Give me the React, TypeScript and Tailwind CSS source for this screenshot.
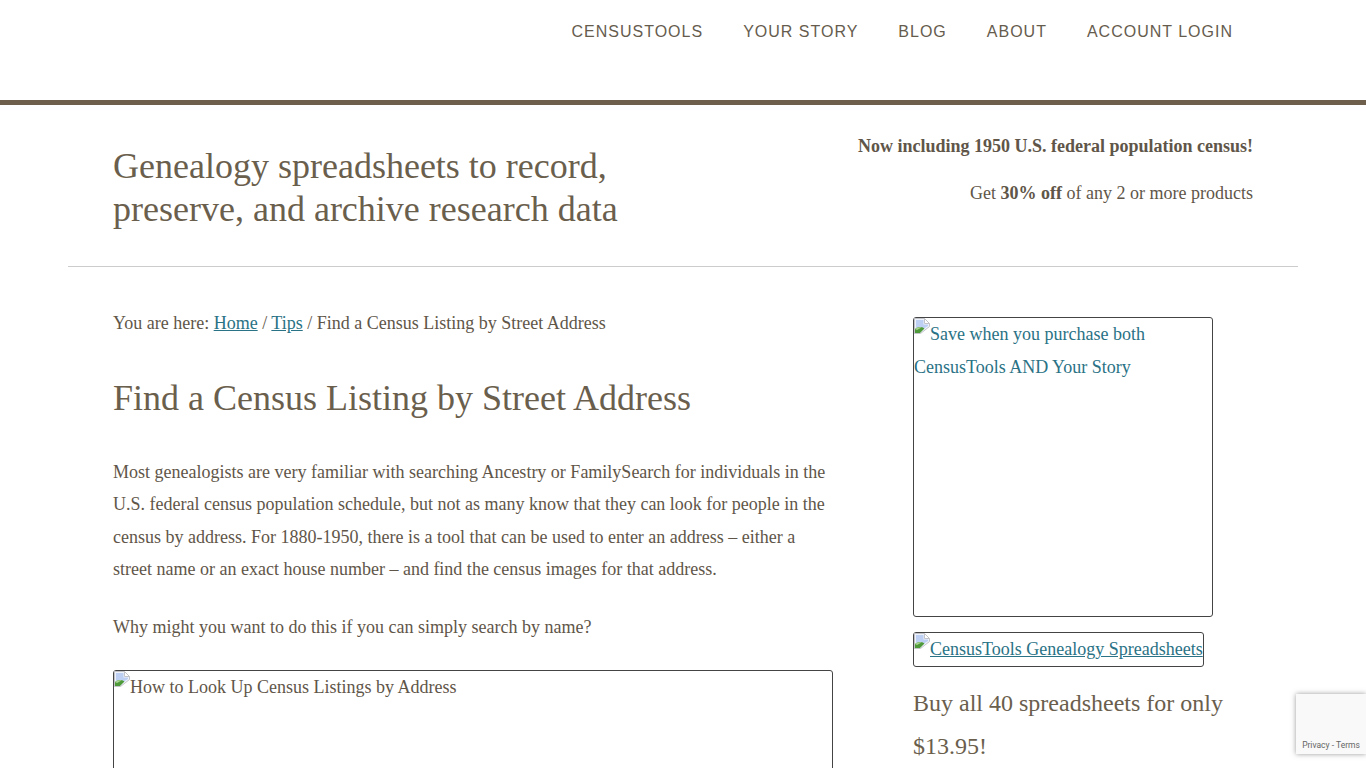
const navLinks = ["CensusTools", "Your Story", "Blog", "About", "Account Login"];

function BrokenImage() {
  return (
    <svg viewBox="0 0 16 16" className="inline-block h-4 w-4 align-[6px]">
      <path d="M0.5 0.5H10.5L15.5 5.5V8.5L6.5 15.5H0.5Z" fill="#eef2fb" stroke="#c2c4ca" />
      <path d="M10.5 0.5V5.5H15.5Z" fill="#ffffff" stroke="#c2c4ca" />
      <path d="M2 2H9.5V6.5H14V8L10 10.5C7 8.5 4 8.5 2 10Z" fill="#bdd0f4" />
      <path d="M1 15V11C4 8.5 7.5 8.5 10.5 10.5L6 15Z" fill="#4e9a3a" />
      <path d="M1 11C3 9.5 5.5 9 7.5 9.5L3 12Z" fill="#a9d392" />
    </svg>
  );
}

export default function App() {
  return (
    <div className="relative h-[768px] overflow-hidden bg-white font-['Liberation_Serif',serif] text-[18px] leading-[32.4px] text-[#5f5649]">
      <header className="flex h-[105px] justify-end gap-10 border-b-[5px] border-[#6d5f4b] pt-[20px] pr-[133px] font-['Liberation_Sans',sans-serif] text-[16px] leading-6 tracking-[1px] text-[#665c4e] uppercase">
        {navLinks.map((link) => (
          <a key={link}>{link}</a>
        ))}
      </header>

      <div className="mx-[68px] flex h-[162px] justify-between border-b border-[#cccccc] px-[45px]">
        <h2 className="mt-[40px] w-[560px] text-[36px] leading-[43.2px] text-[#6a5e4d]">
          Genealogy spreadsheets to record, preserve, and archive research data
        </h2>
        <div className="mt-[25px] text-right">
          <p className="mb-[15px] font-bold">Now including 1950 U.S. federal population census!</p>
          <p>
            Get <b>30% off</b> of any 2 or more products
          </p>
        </div>
      </div>

      <div className="ml-[113px] flex">
        <main className="w-[720px] pt-[40px]">
          <p>
            You are here: <a className="text-[#2a7285] underline">Home</a> /{" "}
            <a className="text-[#2a7285] underline">Tips</a> / Find a Census Listing by Street Address
          </p>
          <h1 className="mt-[37.4px] mb-[36px] text-[36px] leading-[43.2px] text-[#6a5e4d]">
            Find a Census Listing by Street Address
          </h1>
          <p className="mb-[25px]">
            Most genealogists are very familiar with searching Ancestry or FamilySearch for individuals in the U.S.
            federal census population schedule, but not as many know that they can look for people in the census by
            address. For 1880-1950, there is a tool that can be used to enter an address – either a street name or an
            exact house number – and find the census images for that address.
          </p>
          <p className="mb-[27px]">Why might you want to do this if you can simply search by name?</p>
          <div className="h-[405px] rounded-[3px] border border-[#444444]">
            <BrokenImage />
            How to Look Up Census Listings by Address
          </div>
        </main>

        <aside className="ml-[80px] w-[340px] pt-[50.4px]">
          <a className="block h-[300px] w-[300px] rounded-[3px] border border-[#444444] text-[#2a7285]">
            <BrokenImage />
            Save when you purchase both CensusTools AND Your Story
          </a>
          <a className="mt-[15px] block h-[35px] w-[291px] rounded-[3px] border border-[#444444] whitespace-nowrap text-[#2a7285] underline">
            <BrokenImage />
            CensusTools Genealogy Spreadsheets
          </a>
          <p className="mt-[14.6px] w-[320px] text-[24px] leading-[43.2px] text-[#6a5e4d]">
            Buy all 40 spreadsheets for only $13.95!
          </p>
        </aside>
      </div>

      <div className="absolute top-[694px] left-[1296px] flex h-[60px] w-[70px] items-end justify-center bg-[#f9f9f9] pb-[3px] font-['Roboto',sans-serif] text-[8.5px] leading-[12px] text-[#666666] shadow-[0_0_5px_rgba(128,128,128,0.8)]">
        Privacy - Terms
      </div>
    </div>
  );
}
